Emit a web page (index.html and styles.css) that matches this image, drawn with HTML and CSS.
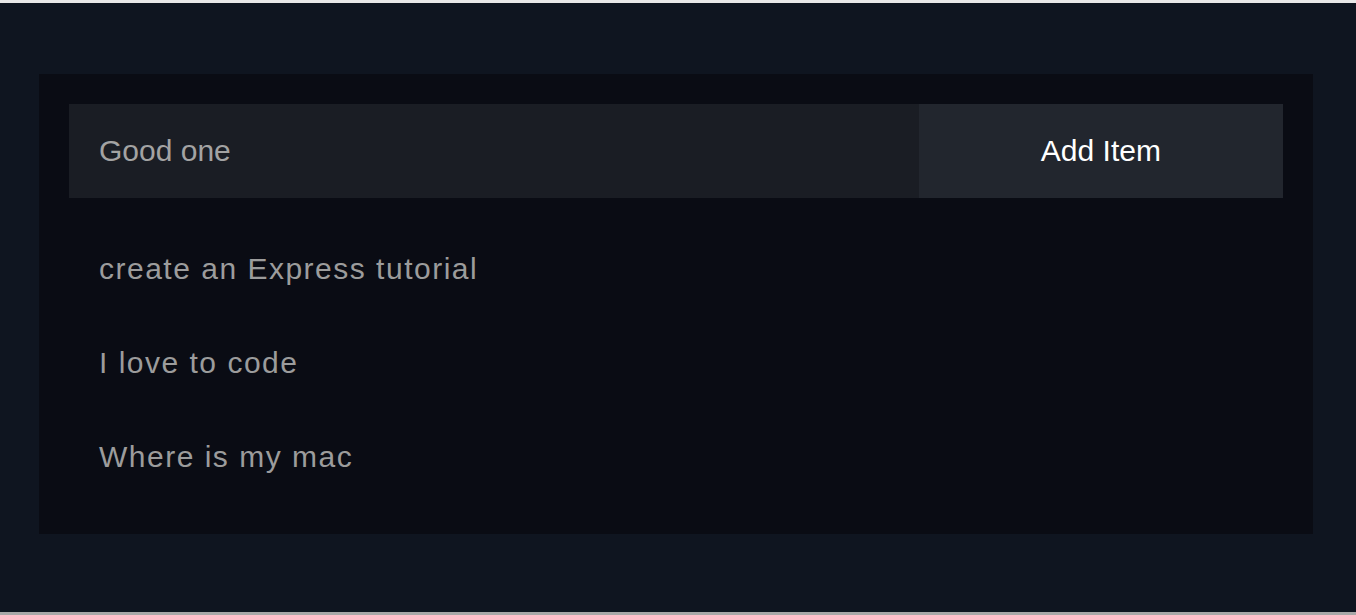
FILE: index.html
```html
<!DOCTYPE html>
<html lang="en">
<head>
<meta charset="utf-8">
<title>Todo List</title>
<link rel="stylesheet" href="styles.css">
</head>
<body>
  <main class="page">
    <section class="card">
      <form class="add-form">
        <input class="add-input" type="text" value="Good one">
        <button class="add-btn" type="button">Add Item</button>
      </form>
      <ul class="items">
        <li class="item">create an Express tutorial</li>
        <li class="item">I love to code</li>
        <li class="item">Where is my mac</li>
      </ul>
    </section>
  </main>
</body>
</html>
```

FILE: styles.css
```css
html, body {
  margin: 0;
  padding: 0;
  height: 100%;
}

body {
  background: #0f1520;
  border-top: 3px solid #e8e8e8;
  border-bottom: 3px solid #a8a8a8;
  box-sizing: border-box;
  font-family: "Liberation Sans", Arial, sans-serif;
}

.page {
  height: 100%;
  box-sizing: border-box;
  padding: 71px 43px 0 39px;
}

.card {
  background: #0a0c14;
  padding: 30px;
}

.add-form {
  display: grid;
  grid-template-columns: 70% 30%;
  margin: 0;
}

.add-input {
  min-width: 0;
  width: 100%;
  border: none;
  outline: none;
  background: #1a1d24;
  color: #a3a3a3;
  font-family: "Liberation Sans", Arial, sans-serif;
  font-size: 30px;
  line-height: 34px;
  height: 94px;
  box-sizing: border-box;
  padding: 30px;
  margin: 0;
}

.add-btn {
  min-width: 0;
  border: none;
  background: #22262e;
  color: #ffffff;
  font-family: "Liberation Sans", Arial, sans-serif;
  font-size: 30px;
  line-height: 34px;
  padding: 30px;
  margin: 0;
}

.items {
  list-style: none;
  margin: 24px 0 0;
  padding: 0;
}

.item {
  padding: 30px;
  font-size: 30px;
  line-height: 34px;
  letter-spacing: 1.5px;
  color: #9c9c9c;
}
```
